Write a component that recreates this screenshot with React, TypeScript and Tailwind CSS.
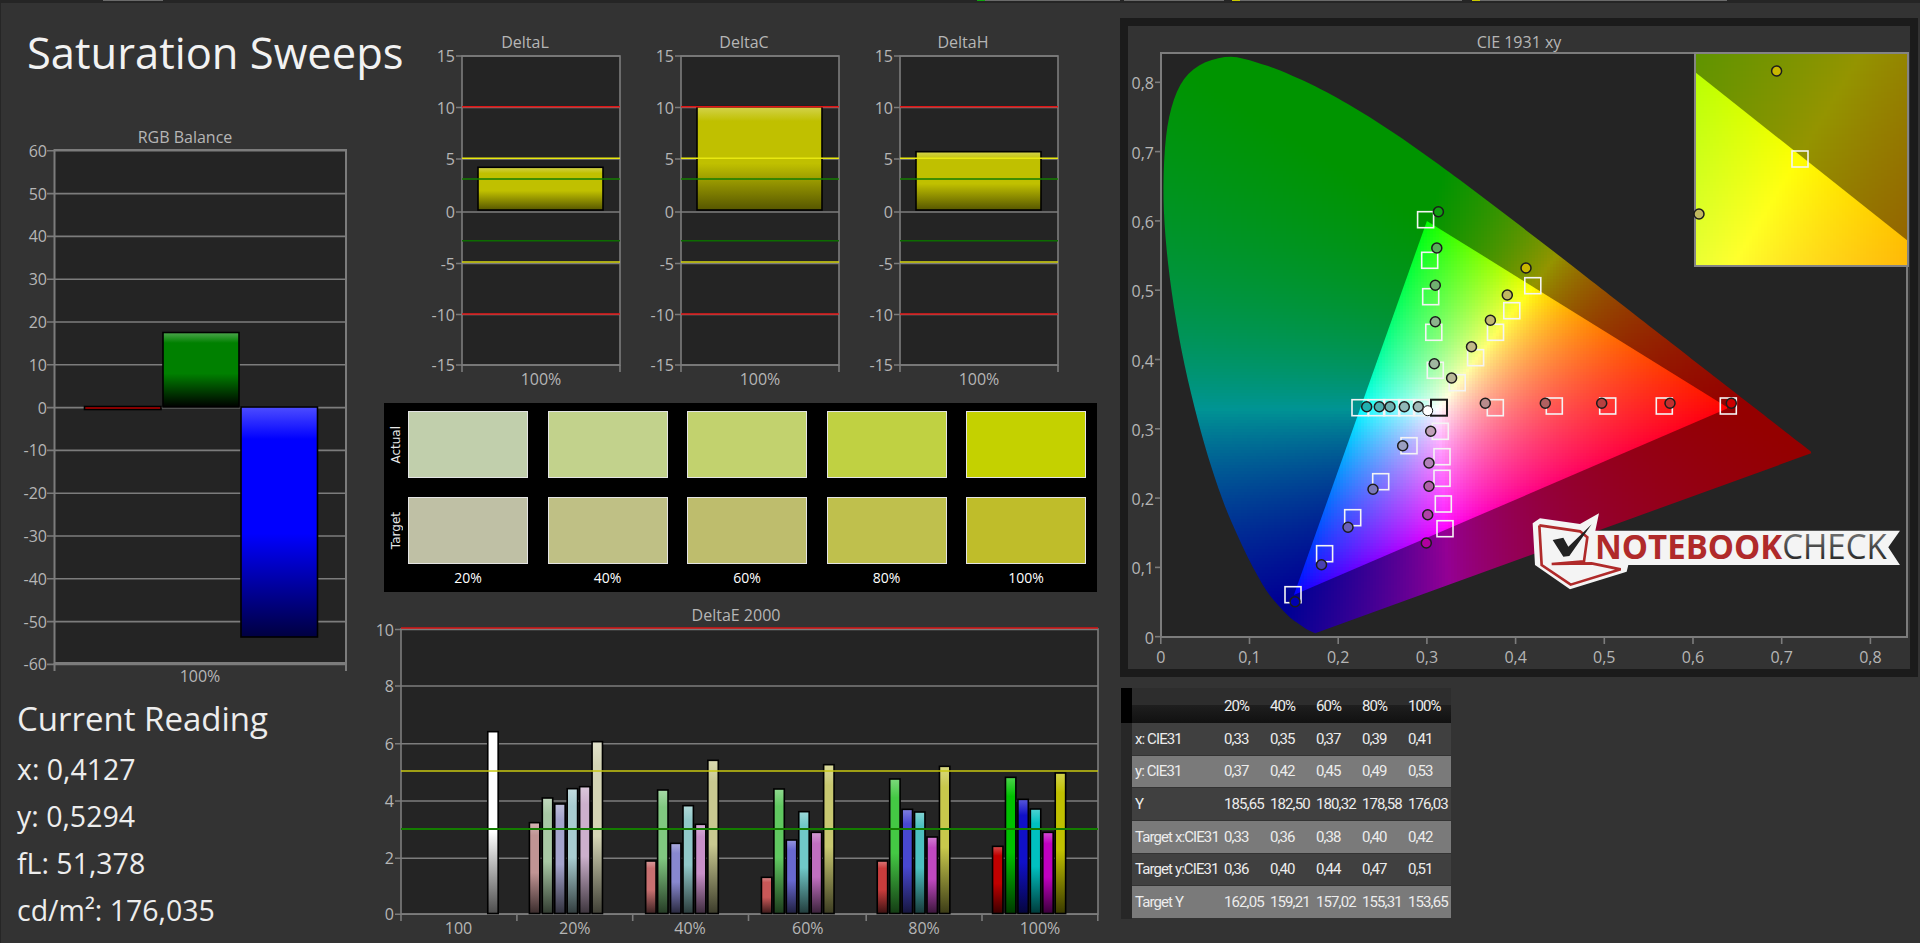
const RAW_LOCUS: [number, number][] = [
  [0.1741, 0.005], [0.1644, 0.0109], [0.1566, 0.0177], [0.144, 0.0297], [0.1241, 0.0578], [0.1096, 0.0868],
  [0.0913, 0.1327], [0.0687, 0.2007], [0.0454, 0.295], [0.0235, 0.4127], [0.0082, 0.5384], [0.003, 0.65],
  [0.0095, 0.7502], [0.031, 0.812], [0.072, 0.8365], [0.1142, 0.8262], [0.1547, 0.8059], [0.1929, 0.7816],
  [0.2296, 0.7543], [0.2658, 0.7243], [0.3016, 0.6923], [0.3373, 0.6589], [0.3731, 0.6245], [0.4087, 0.5896],
  [0.4441, 0.5547], [0.4788, 0.5202], [0.5125, 0.4866], [0.5448, 0.4544], [0.5752, 0.4242], [0.6029, 0.3965],
  [0.627, 0.3725], [0.6658, 0.334], [0.6915, 0.3083], [0.7079, 0.292], [0.726, 0.274], [0.7347, 0.2653],
];
const GAMUT: [number, number][] = [[0.64, 0.33], [0.3, 0.6], [0.15, 0.06]];

// round the measured curve off so the horseshoe has no corners
function smooth(list: [number, number][], steps: number) {
  const out: [number, number][] = [];
  for (let i = 0; i < list.length - 1; i++) {
    const p0 = list[Math.max(0, i - 1)];
    const p1 = list[i];
    const p2 = list[i + 1];
    const p3 = list[Math.min(list.length - 1, i + 2)];
    for (let s = 0; s < steps; s++) {
      const t = s / steps;
      const at = (k: 0 | 1) =>
        0.5 * (2 * p1[k] + (p2[k] - p0[k]) * t + (2 * p0[k] - 5 * p1[k] + 4 * p2[k] - p3[k]) * t * t + (3 * p1[k] - p0[k] - 3 * p2[k] + p3[k]) * t * t * t);
      out.push([at(0), at(1)]);
    }
  }
  out.push(list[list.length - 1]);
  return out;
}
const LOCUS = smooth(RAW_LOCUS, 6);

const px = (x: number) => 1160.8 + x * 887;
const py = (y: number) => 636.7 - y * 693;
const toPts = (list: [number, number][]) => list.map(([x, y]) => `${px(x)},${py(y)}`).join(" ");

function inPoly(x: number, y: number, poly: [number, number][]) {
  let inside = false;
  for (let i = 0, j = poly.length - 1; i < poly.length; j = i++) {
    const [xi, yi] = poly[i];
    const [xj, yj] = poly[j];
    if (yi > y !== yj > y && x < ((xj - xi) * (y - yi)) / (yj - yi) + xi) inside = !inside;
  }
  return inside;
}

// xy to a display colour, brightest channel always at full
function xyColor(x: number, y: number, k: number) {
  const X = x / y;
  const Z = (1 - x - y) / y;
  const r = Math.max(0, 3.2406 * X - 1.5372 - 0.4986 * Z);
  const g = Math.max(0, -0.9689 * X + 1.8758 + 0.0415 * Z);
  const b = Math.max(0, 0.0557 * X - 0.204 + 1.057 * Z);
  const m = Math.max(r, g, b) || 1;
  const power = k < 1 ? 1 : 0.78;
  const f = (v: number) => Math.round(Math.pow(v / m, power) * 255 * k);
  return `rgb(${f(r)},${f(g)},${f(b)})`;
}

type Cell = { x: number; y: number; c: string };

function buildCells(
  x0: number, y0: number, x1: number, y1: number,
  toX: (p: number) => number, toY: (p: number) => number,
  poly: [number, number][], k: number,
) {
  const out: Cell[] = [];
  const size = 3;
  for (let a = x0; a < x1; a += size) {
    for (let b = y0; b < y1; b += size) {
      const cx = toX(a + 1.5);
      const cy = toY(b + 1.5);
      const near = [[0, 0], [-4, -4], [4, -4], [-4, 4], [4, 4]].some(([dx, dy]) =>
        inPoly(toX(a + 1.5 + dx), toY(b + 1.5 + dy), poly),
      );
      if (near && cy > 0.001) out.push({ x: a, y: b, c: xyColor(cx, cy, k) });
    }
  }
  return out;
}

const fromPx = (p: number) => (p - 1160.8) / 887;
const fromPy = (p: number) => (636.7 - p) / 693;
const mainOuter = buildCells(1160, 54, 1830, 636, fromPx, fromPy, LOCUS, 0.58);
const mainInner = buildCells(1280, 210, 1740, 610, fromPx, fromPy, GAMUT, 1);

// inset view: 1695..1908 / 53..266 on the page
const insetX = (p: number) => 0.3894 + ((p - 1695) / 213) * 0.0608;
const insetY = (p: number) => 0.5345 - ((p - 53) / 213) * 0.0608;
const insetBox: [number, number][] = [[0.3, 0.7], [0.6, 0.7], [0.6, 0.4], [0.3, 0.4]];
const insetOuter = buildCells(1695, 53, 1908, 266, insetX, insetY, insetBox, 0.58);
const insetInner = buildCells(1695, 53, 1908, 266, insetX, insetY, GAMUT, 1);

function mix(hex: string, target: number, amount: number) {
  const n = parseInt(hex.slice(1), 16);
  const ch = [(n >> 16) & 255, (n >> 8) & 255, n & 255].map((v) => Math.round(v + (target - v) * amount));
  return `rgb(${ch[0]},${ch[1]},${ch[2]})`;
}

function Bar({ x, y, w, h, color, dark = 0.7 }: { x: number; y: number; w: number; h: number; color: string; dark?: number }) {
  const id = `bar-${color.slice(1)}-${Math.round(dark * 100)}`;
  return (
    <g>
      <linearGradient id={id} x1="0" y1="0" x2="0" y2="1">
        <stop offset="0" stopColor={mix(color, 255, 0.3)} />
        <stop offset="0.14" stopColor={color} />
        <stop offset="0.55" stopColor={color} />
        <stop offset="1" stopColor={mix(color, 0, dark)} />
      </linearGradient>
      <rect x={x} y={y} width={w} height={h} fill={`url(#${id})`} stroke="#000" strokeWidth="1.6" />
    </g>
  );
}

function Label({ x, y, anchor = "middle", children }: { x: number; y: number; anchor?: "start" | "middle" | "end"; children: React.ReactNode }) {
  return (
    <text x={x} y={y} textAnchor={anchor} className="fill-[#b6b6b6] text-[16px]">
      {children}
    </text>
  );
}

const GRID = "#7c7c7c";

function RgbChart() {
  const ticks = [60, 50, 40, 30, 20, 10, 0, -10, -20, -30, -40, -50, -60];
  const yOf = (v: number) => 407.6 - v * 4.28;
  return (
    <svg viewBox="0 120 380 570" width="380" height="570" className="block">
      <Label x={185} y={143}>RGB Balance</Label>
      <rect x="54.5" y="150" width="291.5" height="513" fill="#242424" />
      {ticks.map((t) => (
        <g key={t}>
          <line x1="47" x2="346" y1={yOf(t)} y2={yOf(t)} stroke={GRID} strokeWidth="1.6" />
          <Label x={47} y={yOf(t) + 6} anchor="end">{t}</Label>
        </g>
      ))}
      <rect x="54.5" y="150" width="291.5" height="513" fill="none" stroke={GRID} strokeWidth="2" />
      <line x1="54.5" x2="54.5" y1="663" y2="671" stroke={GRID} strokeWidth="2" />
      <line x1="346" x2="346" y1="663" y2="671" stroke={GRID} strokeWidth="2" />
      <Bar x={84.5} y={406.5} w={76.5} h={3} color="#c00000" dark={0} />
      <Bar x={163} y={332.5} w={76} h={74.5} color="#008000" dark={1} />
      <Bar x={241} y={407} w={76.5} h={230} color="#0000ff" dark={0.75} />
      <Label x={200} y={682}>100%</Label>
    </svg>
  );
}

function DeltaChart({ title, top }: { title: string; top: number }) {
  const ticks: [string, number][] = [["15", 56], ["10", 107.5], ["5", 159], ["0", 212], ["-5", 263.5], ["-10", 314.5], ["-15", 365]];
  const L = 38;
  const R = 196;
  const flat = (y: number, color: string) => <line x1={L} x2={R} y1={y} y2={y} stroke={color} strokeWidth="1.6" />;
  return (
    <svg viewBox="0 30 219 365" width="219" height="365" className="block">
      <Label x={101} y={48}>{title}</Label>
      <rect x={L} y={56} width={R - L} height={309} fill="#242424" />
      {ticks.map(([t, y]) => (
        <g key={t}>
          <line x1={L - 6} x2={R} y1={y} y2={y} stroke={GRID} strokeWidth="1.6" />
          <Label x={L - 7} y={y + 6} anchor="end">{t}</Label>
        </g>
      ))}
      <rect x={L} y={56} width={R - L} height={309} fill="none" stroke={GRID} strokeWidth="1.6" />
      <line x1={L} x2={L} y1="365" y2="372" stroke={GRID} strokeWidth="1.6" />
      <line x1={R} x2={R} y1="365" y2="372" stroke={GRID} strokeWidth="1.6" />
      <Bar x={L + 16} y={top} w={125} h={210 - top} color="#c0c000" dark={0.55} />
      {flat(106.7, "#e01414")}
      {flat(158.3, "#e8e810")}
      {flat(179, "#147c00")}
      {flat(240.7, "#0c6c00")}
      {flat(262, "#d8d810")}
      {flat(314, "#e01414")}
      <Label x={117} y={385}>100%</Label>
    </svg>
  );
}

const ACTUAL = ["#c1cfac", "#c2d28c", "#c2d26e", "#c0d142", "#c4d100"];
const TARGET = ["#bfc0a5", "#bfc085", "#bebd6d", "#bfc04d", "#bfbd2a"];
const STEPS = ["20%", "40%", "60%", "80%", "100%"];

function SwatchPanel() {
  return (
    <div className="ml-[4px] mt-[8px] flex h-[189px] w-[713px] bg-black pt-[8px]">
      <div className="flex w-[24px] flex-col gap-y-[19px] font-['DejaVu_Sans',sans-serif] text-[12px] text-[#e8e8e8]">
        {["Actual", "Target"].map((t) => (
          <div key={t} className="flex h-[67px] items-center justify-center">
            <span className="rotate-180 [writing-mode:vertical-rl]">{t}</span>
          </div>
        ))}
      </div>
      <div className="grid grid-cols-[repeat(5,120px)] grid-rows-[67px_67px_auto] gap-x-[19.5px] gap-y-[19px]">
        {ACTUAL.concat(TARGET).map((c, i) => (
          <div key={i} className="border border-[#e4e4e4]" style={{ backgroundColor: c }} />
        ))}
        {STEPS.map((s) => (
          <div key={s} className="-mt-[16px] text-center text-[14px] leading-[22px] text-white">{s}</div>
        ))}
      </div>
    </div>
  );
}

const DE_GROUPS: { name: string; bars: [number, number, string][] }[] = [
  { name: "100", bars: [[257, 395, "#ffffff"]] },
  { name: "20%", bars: [[344, 668, "#c09494"], [371, 594, "#a8c8a4"], [397, 612, "#a4a4cc"], [423, 566, "#a8ccd0"], [449, 560, "#ccb0cc"], [475, 425, "#d4d4b4"]] },
  { name: "40%", bars: [[587, 783, "#c87070"], [612, 570, "#80c880"], [639, 730, "#8888d0"], [665, 617, "#90c8c8"], [691, 673, "#c890c8"], [717, 481, "#c8c890"]] },
  { name: "60%", bars: [[829, 832, "#c85858"], [855, 567, "#60c860"], [881, 720, "#6868d0"], [907, 635, "#70c8c8"], [933, 697, "#c070c0"], [959, 494, "#c8c870"]] },
  { name: "80%", bars: [[1071, 783, "#c83c3c"], [1097, 537, "#44c844"], [1123, 628, "#4848d0"], [1149, 636, "#4cc0c0"], [1175, 711, "#c048c0"], [1201, 499, "#c8c84c"]] },
  { name: "100%", bars: [[1312, 739, "#c00000"], [1339, 532, "#00c000"], [1365, 598, "#1010c8"], [1391, 627, "#00c0c0"], [1417, 697, "#c000c0"], [1443, 519, "#c0c000"]] },
];

function DeltaEChart() {
  const L = 401;
  const R = 1098;
  const grid: [string, number][] = [["10", 629.5], ["8", 686], ["6", 743.7], ["4", 801], ["2", 858.3], ["0", 914.3]];
  const seps = [401, 516.9, 632.7, 748.5, 866.2, 982, 1097.8];
  const centers = [458.5, 574.8, 690, 807.8, 924, 1040];
  return (
    <svg viewBox="380 592 740 351" width="740" height="351" className="block overflow-visible">
      <Label x={736} y={621}>DeltaE 2000</Label>
      <rect x={L} y={629} width={R - L} height={285} fill="#242424" />
      {grid.map(([t, y]) => (
        <g key={t}>
          <line x1={L - 6} x2={R} y1={y} y2={y} stroke={GRID} strokeWidth="1.6" />
          <Label x={L - 7} y={y + 6} anchor="end">{t}</Label>
        </g>
      ))}
      <rect x={L} y={629} width={R - L} height={285} fill="none" stroke={GRID} strokeWidth="1.6" />
      {seps.map((x) => (
        <line key={x} x1={x} x2={x} y1="914" y2="921" stroke={GRID} strokeWidth="1.6" />
      ))}
      {DE_GROUPS.map((g, gi) => (
        <g key={g.name}>
          {g.bars.map(([zx, zy, color]) => (
            <Bar key={zx} x={370 + zx / 2.09 - 5.2} y={600 + zy / 3} w={10.4} h={913.5 - 600 - zy / 3} color={color} dark={0.7} />
          ))}
          <Label x={centers[gi]} y={934}>{g.name}</Label>
        </g>
      ))}
      <line x1={L} x2={R} y1="628" y2="628" stroke="#d81414" strokeWidth="1.4" />
      <line x1={L} x2={R} y1="771" y2="771" stroke="#c8c810" strokeWidth="1.6" />
      <line x1={L} x2={R} y1="829" y2="829" stroke="#147c00" strokeWidth="1.8" />
    </svg>
  );
}

const SQUARES: [number, number][] = [
  [1425.6, 219.7], [1429.7, 260.3], [1430.7, 296.7], [1433.8, 332.3], [1532.8, 285.7], [1511.8, 310.7], [1495.5, 332.3],
  [1475.6, 357.7], [1435.3, 370.3], [1457.2, 382.7], [1360, 407.7], [1376.7, 407.7], [1391.7, 407.7], [1406.7, 407.7],
  [1421.7, 407.7], [1495.3, 407.7], [1554.3, 406], [1607.7, 406], [1664.3, 406], [1728.3, 406], [1440.3, 431.3],
  [1409, 445.7], [1442, 456.7], [1442, 478.3], [1380.7, 481.7], [1443.3, 504], [1352.7, 517.7], [1445, 528.7],
  [1324.6, 553.7], [1293, 594.7],
];

const DOTS: [number, number, string][] = [
  [1438.4, 211.7, "#10a010"], [1436.8, 248, "#58b058"], [1435.3, 285.3, "#70b070"], [1435.3, 321.7, "#8cb48c"], [1434.3, 363.7, "#a0b8a0"],
  [1526, 268, "#c8b800"], [1507.3, 295, "#c0b860"], [1490.4, 320.3, "#c0b870"], [1471.5, 346.7, "#c0b888"], [1451.6, 378, "#b8b898"],
  [1366.7, 406.7, "#20b0b0"], [1379.3, 406.7, "#50b0b0"], [1390, 406.7, "#70b0b0"], [1404.3, 406.7, "#90b8b8"], [1418.3, 406.7, "#a0b8b8"],
  [1485.3, 403.3, "#b88c8c"], [1545.3, 403.3, "#b06060"], [1601.7, 403.3, "#b84040"], [1670, 403.3, "#c03030"], [1731.3, 403.3, "#cc0000"],
  [1430.7, 431.3, "#c0a0b8"], [1402.7, 445.7, "#9a9ec0"], [1429, 463, "#b080b8"], [1429, 486.3, "#b060a8"], [1373, 489.3, "#7a78b8"],
  [1427.7, 514.7, "#b040a8"], [1348, 527.3, "#6a60b8"], [1426.3, 543, "#b000a0"], [1321.5, 564.7, "#4a40b0"], [1295, 601.7, "#0000b0"],
];

function Cells({ cells }: { cells: Cell[] }) {
  return (
    <g shapeRendering="crispEdges">
      {cells.map((c) => (
        <rect key={`${c.x}-${c.y}`} x={c.x} y={c.y} width="3" height="3" fill={c.c} />
      ))}
    </g>
  );
}

function Logo() {
  return (
    <g transform="translate(1500 490) scale(0.3333)">
      <linearGradient id="check-fill" x1="0" y1="0" x2="0" y2="1">
        <stop offset="0" stopColor="#8a8a8a" />
        <stop offset="1" stopColor="#111" />
      </linearGradient>
      <polygon
        points="98,100 120,85 240,102 297,70 286,122 1200,122 1165,172 1200,225 385,225 380,245 210,298 105,225"
        fill="#f4f4f4"
      />
      <path d="M118 106 L240 124 L262 142 L252 214 L155 222 M118 106 L125 225 L212 284 L362 238 L275 220 L155 222" fill="none" stroke="#b02a2a" strokeWidth="8" />
      <polygon points="158,150 190,143 205,170 275,103 208,198 190,200" fill="#222" />
      <text x="285" y="208" textLength="875" lengthAdjust="spacingAndGlyphs" fontSize="104">
        <tspan fontWeight="700" fill="#b02a2a">NOTEBOOK</tspan>
        <tspan fill="url(#check-fill)">CHECK</tspan>
      </text>
    </g>
  );
}

function CieChart() {
  const xTicks = ["0", "0,1", "0,2", "0,3", "0,4", "0,5", "0,6", "0,7", "0,8"];
  const yTicks = ["0", "0,1", "0,2", "0,3", "0,4", "0,5", "0,6", "0,7", "0,8"];
  return (
    <svg viewBox="1128 26 782 643" width="782" height="643" className="block">
      <clipPath id="locus-clip"><polygon points={toPts(LOCUS)} /></clipPath>
      <clipPath id="gamut-clip"><polygon points={toPts(GAMUT)} /></clipPath>
      <clipPath id="inset-gamut"><polygon points="1695,72 1908,241 1908,266 1695,266" /></clipPath>
      <Label x={1519} y={48}>CIE 1931 xy</Label>
      <rect x="1161" y="53" width="746" height="584" fill="#242424" />
      <g clipPath="url(#locus-clip)"><Cells cells={mainOuter} /></g>
      <g clipPath="url(#gamut-clip)"><Cells cells={mainInner} /></g>
      <rect x="1161" y="53" width="746" height="584" fill="none" stroke={GRID} strokeWidth="2" />
      {yTicks.map((t, i) => (
        <g key={t}>
          <line x1="1155" x2="1161" y1={py(i / 10)} y2={py(i / 10)} stroke={GRID} strokeWidth="1.6" />
          <Label x={1154} y={py(i / 10) + 7} anchor="end">{t}</Label>
        </g>
      ))}
      {xTicks.map((t, i) => (
        <g key={t}>
          <line x1={px(i / 10)} x2={px(i / 10)} y1="637" y2="644" stroke={GRID} strokeWidth="1.6" />
          <Label x={px(i / 10)} y={663}>{t}</Label>
        </g>
      ))}
      {SQUARES.map(([x, y], i) => (
        <rect key={i} x={x - 8} y={y - 8} width="16" height="16" fill="none" stroke="#f4f4f4" strokeWidth="1.6" />
      ))}
      <rect x="1431" y="399.7" width="16" height="16" fill="none" stroke="#1a1a1a" strokeWidth="2" />
      {DOTS.map(([x, y, c], i) => (
        <circle key={i} cx={x} cy={y} r="5" fill={c} stroke="#1c1c1c" strokeWidth="1.5" />
      ))}
      <circle cx="1427.7" cy="410.7" r="5" fill="#fff" stroke="#1c1c1c" strokeWidth="1" />
      <Logo />
      <Cells cells={insetOuter} />
      <g clipPath="url(#inset-gamut)"><Cells cells={insetInner} /></g>
      <rect x="1695" y="53" width="213" height="213" fill="none" stroke="#848484" strokeWidth="2" />
      <rect x="1792" y="151" width="16" height="16" fill="none" stroke="#f4f4f4" strokeWidth="1.6" />
      <circle cx="1776.6" cy="71" r="5" fill="#c8b800" stroke="#1c1c1c" strokeWidth="1.5" />
      <circle cx="1699" cy="214" r="5" fill="#c0b860" stroke="#1c1c1c" strokeWidth="1.5" />
    </svg>
  );
}

const TABLE: string[][] = [
  ["x: CIE31", "0,33", "0,35", "0,37", "0,39", "0,41"],
  ["y: CIE31", "0,37", "0,42", "0,45", "0,49", "0,53"],
  ["Y", "185,65", "182,50", "180,32", "178,58", "176,03"],
  ["Target x:CIE31", "0,33", "0,36", "0,38", "0,40", "0,42"],
  ["Target y:CIE31", "0,36", "0,40", "0,44", "0,47", "0,51"],
  ["Target Y", "162,05", "159,21", "157,02", "155,31", "153,65"],
];

function ReadingsTable() {
  return (
    <div className="ml-[1px] mt-[11px] w-[330px] font-['Roboto',sans-serif] text-[15px] tracking-[-0.9px] text-[#ececec]">
      <div className="flex h-[35px]">
        <div className="w-[11px] bg-black" />
        <div className="grid w-[319px] grid-cols-[92px_46px_46px_46px_46px_43px] items-center bg-[linear-gradient(#2d2d2d_0%,#2d2d2d_50%,#1e1e1e_50%,#111_100%)] pt-[1px]">
          <span />
          {STEPS.map((s) => (
            <span key={s}>{s}</span>
          ))}
        </div>
      </div>
      {TABLE.map((row, i) => (
        <div key={row[0]} className="flex h-[32.7px]">
          <div className="w-[11px] bg-[#272727]" />
          <div className={`grid w-[319px] grid-cols-[92px_46px_46px_46px_46px_43px] items-center border-b border-[#333] ${i % 2 === 0 ? "bg-[#404040]" : "bg-[#7a7a7a]"}`}>
            {row.map((v, j) => (
              <span key={j} className={j === 0 ? "pl-[3px]" : ""}>{v}</span>
            ))}
          </div>
        </div>
      ))}
    </div>
  );
}

function TopStrip() {
  return (
    <div className="flex h-[3px] items-start bg-[#252525]">
      <div className="ml-[103px] h-px w-[60px] bg-[#6a6a6a]" />
      <div className="ml-[814px] h-px w-[8px] bg-[#0fa80f]" />
      <div className="h-px w-[135px] bg-[#6a6a6a]" />
      <div className="ml-[4px] h-px w-[100px] bg-[#6a6a6a]" />
      <div className="ml-[8px] h-px w-[8px] bg-[#c8c800]" />
      <div className="h-px w-[222px] bg-[#6a6a6a]" />
      <div className="ml-[10px] h-px w-[8px] bg-[#c8c800]" />
      <div className="h-px w-[247px] bg-[#6a6a6a]" />
    </div>
  );
}

export default function App() {
  return (
    <div className="h-[943px] w-[1920px] overflow-hidden bg-[#333333] font-['Open_Sans',sans-serif] shadow-[inset_1px_0_0_#262626]">
      <TopStrip />
      <div className="flex">
        {/* left column */}
        <div className="w-[380px]">
          <div className="h-[117px] pl-[27px] pt-[28px]">
            <h1 className="whitespace-nowrap text-[43.5px] leading-none text-[#f2f2f2]">Saturation Sweeps</h1>
          </div>
          <RgbChart />
          <div className="pl-[17px] pt-[12px] text-[#ededed]">
            <div className="h-[44px] text-[33px] leading-none">Current Reading</div>
            <div className="text-[28.5px] leading-[47px]">
              <div>x: 0,4127</div>
              <div>y: 0,5294</div>
              <div>fL: 51,378</div>
              <div>cd/m²: 176,035</div>
            </div>
          </div>
        </div>
        {/* middle column */}
        <div className="w-[740px]">
          <div className="flex pl-[44px] pt-[27px]">
            <DeltaChart title="DeltaL" top={167.3} />
            <DeltaChart title="DeltaC" top={106.7} />
            <DeltaChart title="DeltaH" top={151.7} />
          </div>
          <SwatchPanel />
          <DeltaEChart />
        </div>
        {/* right column */}
        <div className="w-[800px]">
          <div className="mt-[15px] w-[798px] bg-[#1b1b1b] p-[8px]">
            <div className="bg-[#333333]">
              <CieChart />
            </div>
          </div>
          <ReadingsTable />
        </div>
      </div>
    </div>
  );
}
